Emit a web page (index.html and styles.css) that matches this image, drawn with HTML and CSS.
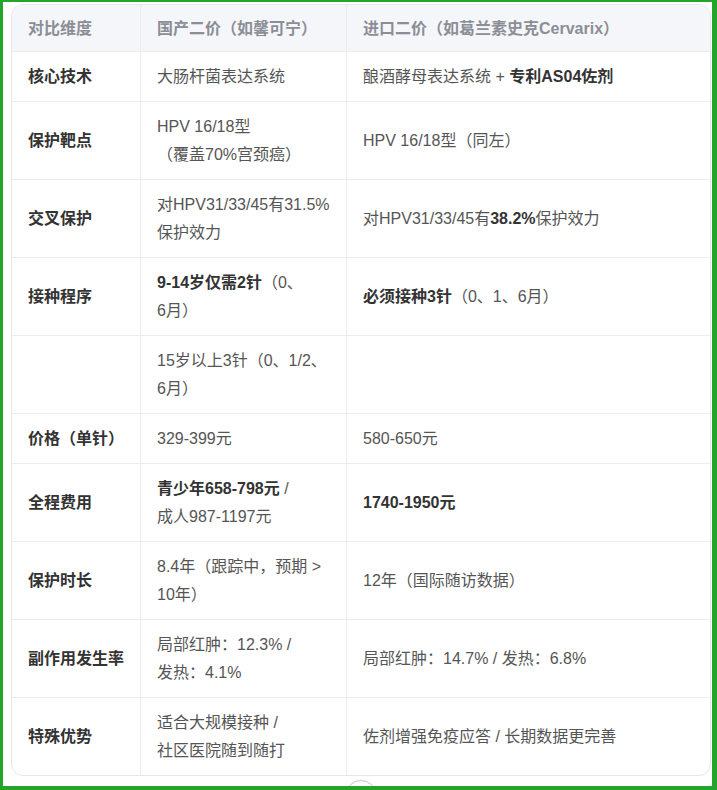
FILE: index.html
```html
<!DOCTYPE html>
<html lang="zh-CN">
<head>
<meta charset="utf-8">
<title>HPV二价疫苗对比</title>
<link rel="stylesheet" href="styles.css">
</head>
<body>
<div class="frame">
  <div class="card">
    <table class="cmp">
      <colgroup>
        <col class="c1"><col class="c2"><col class="c3">
      </colgroup>
      <thead>
        <tr><th>对比维度</th><th>国产二价（如馨可宁）</th><th>进口二价（如葛兰素史克Cervarix）</th></tr>
      </thead>
      <tbody>
        <tr><td class="k">核心技术</td><td>大肠杆菌表达系统</td><td>酿酒酵母表达系统 + <b>专利AS04佐剂</b></td></tr>
        <tr><td class="k">保护靶点</td><td>HPV 16/18型<br>（覆盖70%宫颈癌）</td><td>HPV 16/18型（同左）</td></tr>
        <tr><td class="k">交叉保护</td><td>对HPV31/33/45有31.5%<br>保护效力</td><td>对HPV31/33/45有<b>38.2%</b>保护效力</td></tr>
        <tr><td class="k">接种程序</td><td><b>9-14岁仅需2针</b>（0、<br>6月）</td><td><b>必须接种3针</b>（0、1、6月）</td></tr>
        <tr><td class="k"></td><td>15岁以上3针（0、1/2、<br>6月）</td><td></td></tr>
        <tr><td class="k">价格（单针）</td><td>329-399元</td><td>580-650元</td></tr>
        <tr><td class="k">全程费用</td><td><b>青少年658-798元</b> /<br>成人987-1197元</td><td><b>1740-1950元</b></td></tr>
        <tr><td class="k">保护时长</td><td>8.4年（跟踪中，预期 &gt;<br>10年）</td><td>12年（国际随访数据）</td></tr>
        <tr><td class="k">副作用发生率</td><td>局部红肿：12.3% /<br>发热：4.1%</td><td>局部红肿：14.7% / 发热：6.8%</td></tr>
        <tr class="last"><td class="k">特殊优势</td><td>适合大规模接种 /<br>社区医院随到随打</td><td>佐剂增强免疫应答 / 长期数据更完善</td></tr>
      </tbody>
    </table>
  </div>
  <div class="scroll-btn"></div>
</div>
</body>
</html>
```

FILE: styles.css
```css
html, body {
  margin: 0;
  padding: 0;
  background: #ffffff;
}

.frame {
  position: relative;
  box-sizing: border-box;
  width: 717px;
  height: 790px;
  border-style: solid;
  border-color: #22a52a;
  border-width: 2px 5px 4px 3px;
  overflow: hidden;
  background: #ffffff;
}

.card {
  box-sizing: border-box;
  width: 700px;
  margin: 2px 0 0 8px;
  border: 1px solid #e6e7ea;
  border-radius: 12px;
  overflow: hidden;
  background: #ffffff;
}

.cmp {
  width: 100%;
  border-collapse: separate;
  border-spacing: 0;
  table-layout: fixed;
  font-family: "Liberation Sans", "Noto Sans CJK SC", sans-serif;
  font-size: 16px;
  line-height: 28px;
  color: #555555;
}

.c1 { width: 129px; }
.c2 { width: 206px; }
.c3 { width: auto; }

.cmp th,
.cmp td {
  text-align: left;
  vertical-align: middle;
  white-space: nowrap;
  border-right: 1px solid #ececee;
  border-bottom: 1px solid #ececee;
}

.cmp th:last-child,
.cmp td:last-child {
  border-right: none;
}

.cmp th {
  padding: 10px 16px 8px;
  background: #f5f6f9;
  color: #8b8e96;
  font-weight: bold;
}

.cmp td {
  padding: 11px 16px 10px;
}

.cmp td.k {
  color: #333333;
  font-weight: bold;
}

.cmp td b {
  color: #333333;
  font-weight: bold;
}

.cmp tr.last td {
  border-bottom: none;
}

.scroll-btn {
  position: absolute;
  left: 343px;
  top: 778px;
  width: 30px;
  height: 30px;
  box-sizing: border-box;
  border: 1px solid #c9c9ce;
  border-radius: 50%;
  background: #ffffff;
  box-shadow: 0 0 2px rgba(0, 0, 0, 0.08);
}
```
